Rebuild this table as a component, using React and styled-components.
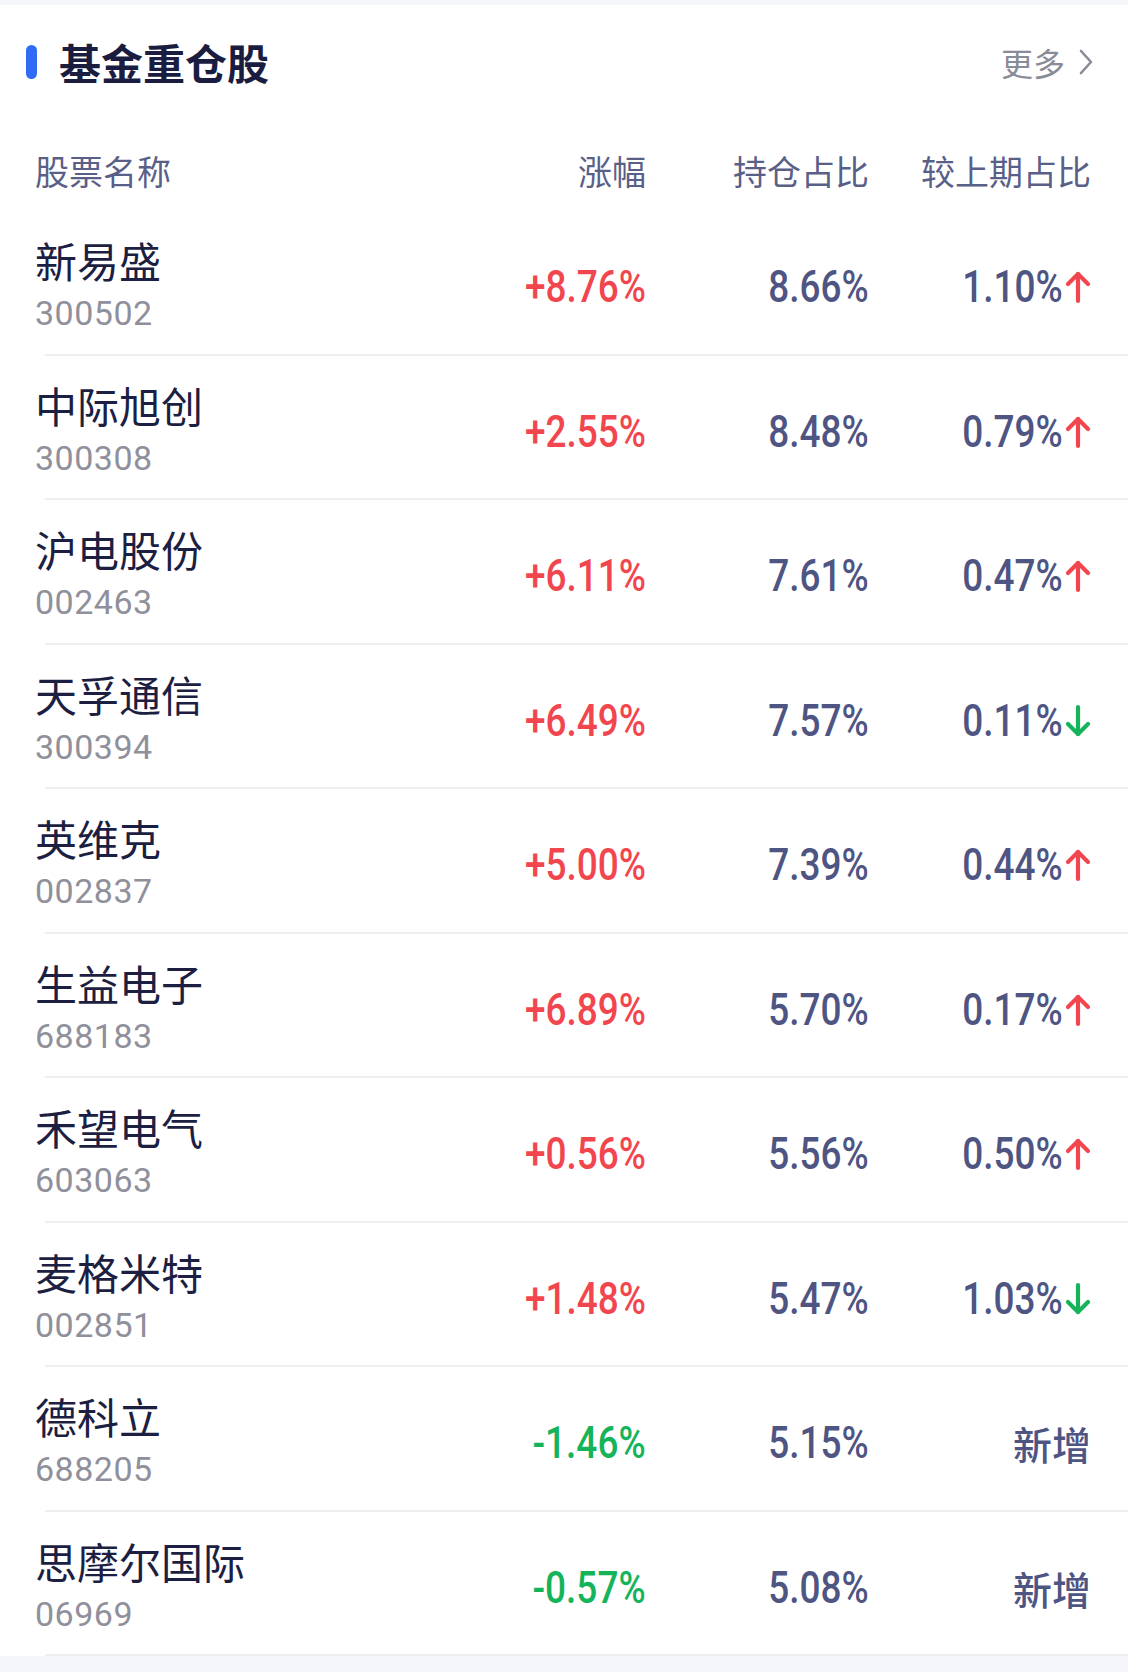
import React from "react";
import styled, { createGlobalStyle } from "styled-components";

const Global = createGlobalStyle`
  html, body { margin: 0; padding: 0; background: #f5f6fa; }
  body { font-family: "Noto Sans CJK SC", "Noto Sans", sans-serif; }
  * { box-sizing: border-box; }
`;

const Page = styled.div`
  width: 1128px;
  padding-top: 5px;
  padding-bottom: 16px;
`;

const Card = styled.section`
  background: #ffffff;
`;

const TitleRow = styled.div`
  height: 114px;
  display: flex;
  align-items: center;
  justify-content: space-between;
  padding: 0 35px 0 26px;
`;

const TitleLeft = styled.div`
  display: flex;
  align-items: center;
  gap: 22px;
`;

const Bar = styled.span`
  width: 11px;
  height: 34px;
  border-radius: 6px;
  background: #2f6bf5;
`;

const Title = styled.h2`
  margin: 0;
  font-size: 42px;
  line-height: 50px;
  font-weight: 700;
  color: #1b1d40;
  font-family: "Noto Sans CJK SC", sans-serif;
`;

const More = styled.a`
  display: flex;
  align-items: center;
  gap: 14px;
  font-size: 32px;
  line-height: 40px;
  color: #8a8b98;
  text-decoration: none;
  font-family: "Noto Sans CJK SC", sans-serif;
`;

const Grid = styled.div`
  display: grid;
  grid-template-columns: 1fr 200px 223px 222px;
  align-items: center;
  padding: 0 37px 0 35px;
`;

const HeaderRow = styled(Grid)`
  height: 92px;
  padding-top: 11px;
`;

const HeadCell = styled.div`
  font-size: 34px;
  line-height: 40px;
  color: #5a5f88;
  text-align: ${(p) => (p.$left ? "left" : "right")};
  font-family: "Noto Sans CJK SC", sans-serif;
`;

const Row = styled(Grid)`
  height: 142.5px;
  padding-top: 4px;
`;

const NameCell = styled.div`
  display: flex;
  flex-direction: column;
  gap: 8px;
`;

const Name = styled.div`
  font-size: 42px;
  line-height: 50px;
  font-weight: 400;
  color: #1c1e42;
  font-family: "Noto Sans CJK SC", sans-serif;
`;

const Code = styled.div`
  font-size: 34px;
  line-height: 40px;
  color: #8f909b;
  font-family: Roboto, "Liberation Sans", sans-serif;
  letter-spacing: 0.5px;
`;

const Num = styled.div`
  display: flex;
  justify-content: flex-end;
  align-items: center;
  gap: 2px;
  padding-top: 6px;
  font-family: Roboto, "Liberation Sans", sans-serif;
  font-weight: 500;
  font-size: 44px;
  line-height: 48px;
  color: ${(p) => p.$color || "#4f5583"};
`;

const Digits = styled.span`
  display: inline-block;
  transform: scaleX(0.84);
  transform-origin: right center;
  margin-left: -20px;
`;

const NewTag = styled.div`
  text-align: right;
  padding-top: 6px;
  font-size: 39px;
  line-height: 46px;
  font-weight: 500;
  color: #4f5583;
  font-family: "Noto Sans CJK SC", sans-serif;
`;

const Divider = styled.div`
  height: 2px;
  margin-left: 45px;
  background: #eeeff3;
`;

const RED = "#f2464f";
const GREEN = "#15b35a";

const Arrow = ({ up }) => (
  <svg width="26" height="34" viewBox="0 0 26 34" fill="none">
    {up ? (
      <g stroke={RED} strokeWidth="4.2" strokeLinecap="round" strokeLinejoin="round">
        <line x1="13" y1="4" x2="13" y2="31" />
        <polyline points="3,14 13,4 23,14" />
      </g>
    ) : (
      <g stroke={GREEN} strokeWidth="4.2" strokeLinecap="round" strokeLinejoin="round">
        <line x1="13" y1="3" x2="13" y2="30" />
        <polyline points="3,20 13,30 23,20" />
      </g>
    )}
  </svg>
);

const Chevron = () => (
  <svg width="14" height="26" viewBox="0 0 14 26" fill="none">
    <polyline points="2,2 12,13 2,24" stroke="#8a8b98" strokeWidth="2.6" strokeLinecap="round" strokeLinejoin="round" />
  </svg>
);

const data = [
  { name: "新易盛", code: "300502", chg: "+8.76%", hold: "8.66%", prev: "1.10%", dir: "up" },
  { name: "中际旭创", code: "300308", chg: "+2.55%", hold: "8.48%", prev: "0.79%", dir: "up" },
  { name: "沪电股份", code: "002463", chg: "+6.11%", hold: "7.61%", prev: "0.47%", dir: "up" },
  { name: "天孚通信", code: "300394", chg: "+6.49%", hold: "7.57%", prev: "0.11%", dir: "down" },
  { name: "英维克", code: "002837", chg: "+5.00%", hold: "7.39%", prev: "0.44%", dir: "up" },
  { name: "生益电子", code: "688183", chg: "+6.89%", hold: "5.70%", prev: "0.17%", dir: "up" },
  { name: "禾望电气", code: "603063", chg: "+0.56%", hold: "5.56%", prev: "0.50%", dir: "up" },
  { name: "麦格米特", code: "002851", chg: "+1.48%", hold: "5.47%", prev: "1.03%", dir: "down" },
  { name: "德科立", code: "688205", chg: "-1.46%", hold: "5.15%", prev: null },
  { name: "思摩尔国际", code: "06969", chg: "-0.57%", hold: "5.08%", prev: null },
];

export default function App() {
  return (
    <Page>
      <Global />
      <Card>
        <TitleRow>
          <TitleLeft>
            <Bar />
            <Title>基金重仓股</Title>
          </TitleLeft>
          <More href="#">
            更多
            <Chevron />
          </More>
        </TitleRow>
        <HeaderRow>
          <HeadCell $left>股票名称</HeadCell>
          <HeadCell>涨幅</HeadCell>
          <HeadCell>持仓占比</HeadCell>
          <HeadCell>较上期占比</HeadCell>
        </HeaderRow>
        {data.map((d) => (
          <React.Fragment key={d.code}>
            <Row>
              <NameCell>
                <Name>{d.name}</Name>
                <Code>{d.code}</Code>
              </NameCell>
              <Num $color={d.chg.startsWith("-") ? GREEN : RED}>
                <Digits>{d.chg}</Digits>
              </Num>
              <Num>
                <Digits>{d.hold}</Digits>
              </Num>
              {d.prev ? (
                <Num>
                  <Digits>{d.prev}</Digits>
                  <Arrow up={d.dir === "up"} />
                </Num>
              ) : (
                <NewTag>新增</NewTag>
              )}
            </Row>
            <Divider />
          </React.Fragment>
        ))}
      </Card>
    </Page>
  );
}
